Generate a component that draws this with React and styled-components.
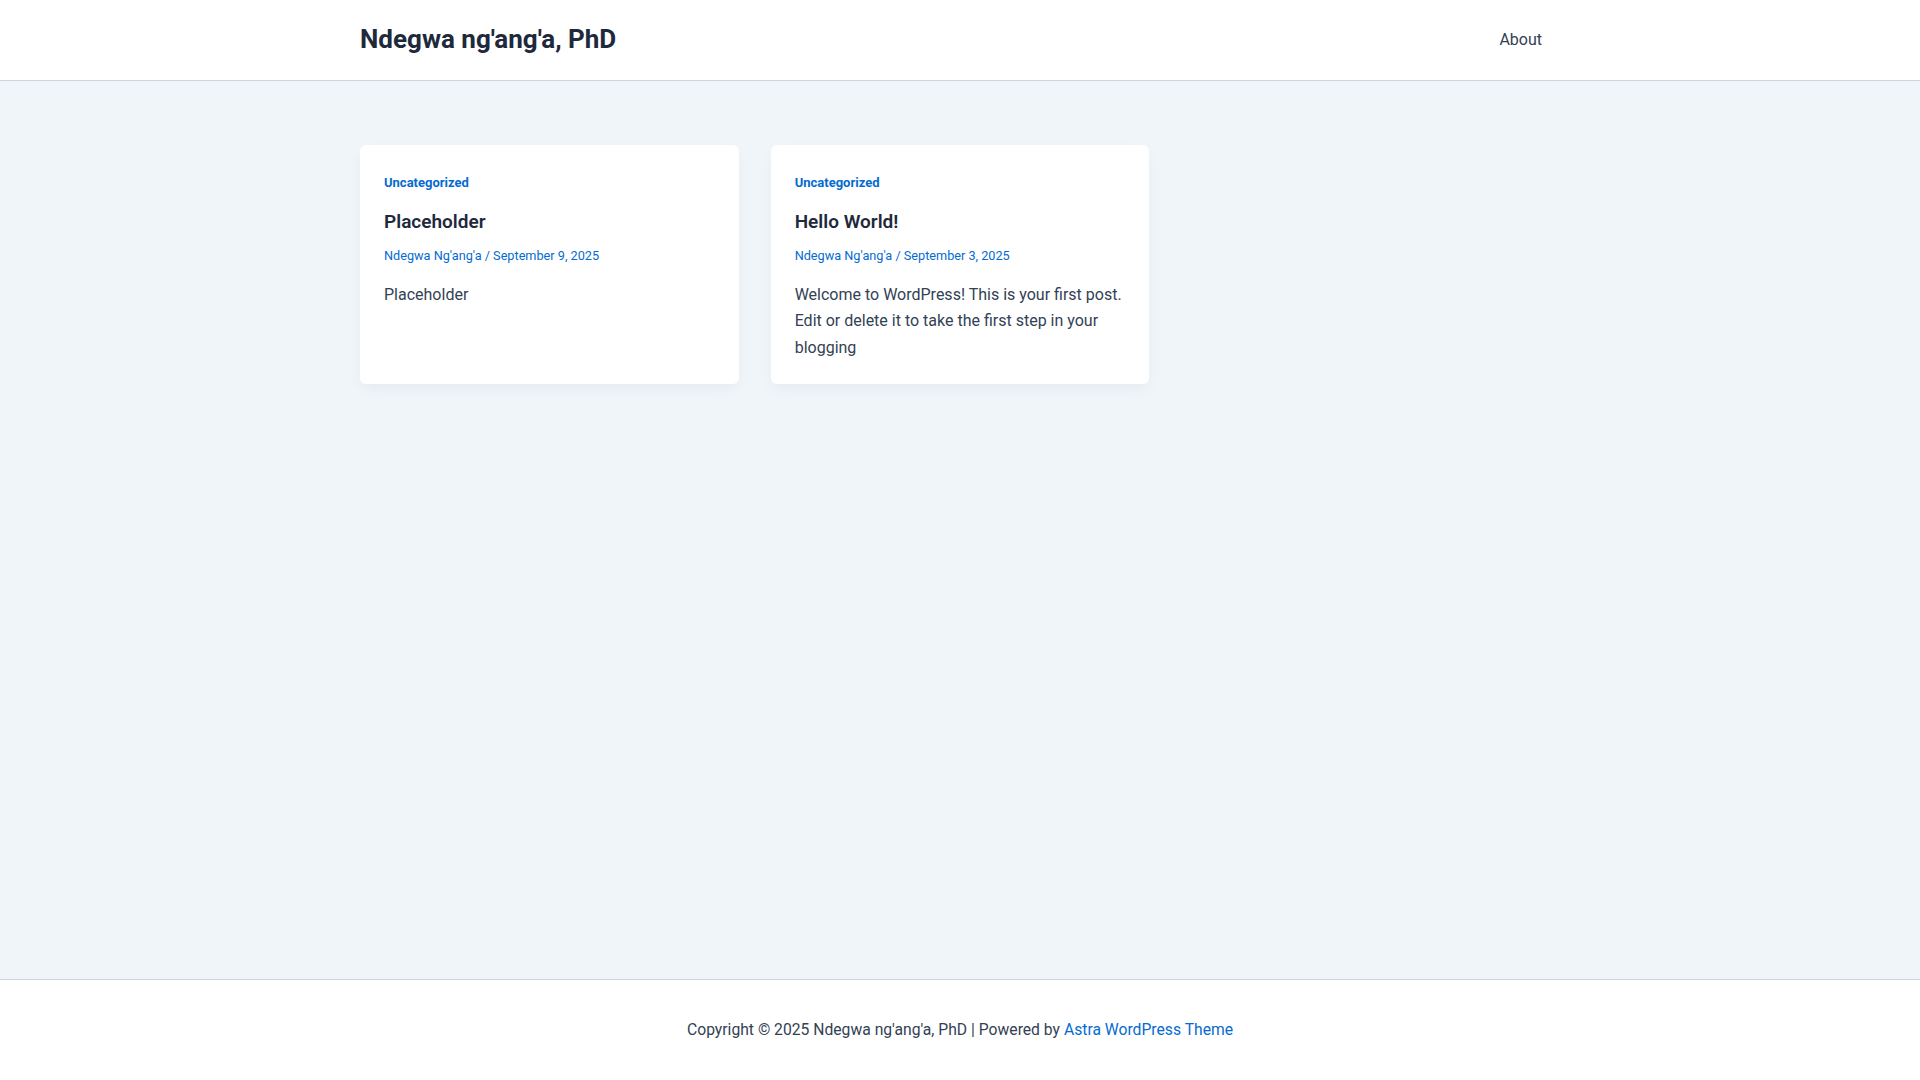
import styled, { createGlobalStyle } from 'styled-components';

const GlobalStyle = createGlobalStyle`
  html, body {
    margin: 0;
    padding: 0;
  }
  body {
    font-family: Roboto, "Liberation Sans", sans-serif;
    color: #334155;
    background: #f0f5fa;
    -webkit-font-smoothing: antialiased;
  }
  a {
    text-decoration: none;
  }
`;

const posts = [
  {
    title: 'Placeholder',
    author: "Ndegwa Ng'ang'a",
    date: 'September 9, 2025',
    excerpt: 'Placeholder',
  },
  {
    title: 'Hello World!',
    author: "Ndegwa Ng'ang'a",
    date: 'September 3, 2025',
    excerpt:
      'Welcome to WordPress! This is your first post. Edit or delete it to take the first step in your blogging',
  },
];

const App = () => {
  return (
    <Page>
      <GlobalStyle />
      <Header>
        <HeaderInner>
          <SiteTitle href="#">Ndegwa ng'ang'a, PhD</SiteTitle>
          <Nav>
            <NavLink href="#">About</NavLink>
          </Nav>
        </HeaderInner>
      </Header>

      <Main>
        <PostGrid>
          {posts.map((post) => (
            <Card key={post.title}>
              <Category href="#">Uncategorized</Category>
              <PostTitle>{post.title}</PostTitle>
              <Meta>
                <a href="#">{post.author}</a> / <span>{post.date}</span>
              </Meta>
              <Excerpt>{post.excerpt}</Excerpt>
            </Card>
          ))}
        </PostGrid>
      </Main>

      <Footer>
        Copyright © 2025 Ndegwa ng'ang'a, PhD | Powered by{' '}
        <FooterLink href="#">Astra WordPress Theme</FooterLink>
      </Footer>
    </Page>
  );
};

export default App;

const Page = styled.div`
  min-height: 100vh;
  display: flex;
  flex-direction: column;
`;

const Header = styled.header`
  background: #fff;
  border-bottom: 1px solid #d1d5db;
`;

const HeaderInner = styled.div`
  width: 1200px;
  margin: 0 auto;
  height: 80px;
  display: flex;
  align-items: center;
  justify-content: space-between;
`;

const SiteTitle = styled.a`
  font-size: 26px;
  font-weight: 700;
  color: #1e293b;
  line-height: 1;
  margin-top: -2px;
`;

const Nav = styled.nav`
  display: flex;
  align-items: center;
`;

const NavLink = styled.a`
  font-size: 16px;
  color: #334155;
  padding: 0 18px 0 16px;
  line-height: 26px;
`;

const Main = styled.main`
  flex: 1;
  padding-top: 64px;
`;

const PostGrid = styled.div`
  width: 1200px;
  margin: 0 auto;
  display: grid;
  grid-template-columns: repeat(3, 1fr);
  gap: 32px;
  align-items: stretch;
`;

const Card = styled.article`
  background: #fff;
  border-radius: 6px;
  box-shadow: 0px 6px 15px -2px rgba(16, 24, 40, 0.05);
  padding: 24px 24px 23px;
  display: flex;
  flex-direction: column;
`;

const Category = styled.a`
  font-size: 13px;
  font-weight: 700;
  color: #046bd2;
  line-height: 20px;
  margin-top: 4px;
  align-self: flex-start;
`;

const PostTitle = styled.h2`
  margin: 15px 0 0;
  font-size: 19px;
  font-weight: 600;
  color: #1e293b;
  line-height: 28px;
`;

const Meta = styled.div`
  margin-top: 10px;
  font-size: 12.7px;
  line-height: 20px;
  color: #046bd2;

  a {
    color: #046bd2;
  }
`;

const Excerpt = styled.p`
  margin: 16px 0 0;
  font-size: 16px;
  line-height: 26.4px;
  color: #334155;
`;

const Footer = styled.footer`
  background: #fff;
  border-top: 1px solid #d1d5db;
  padding: 37px 0;
  text-align: center;
  font-size: 15.7px;
  line-height: 26px;
  color: #334155;
`;

const FooterLink = styled.a`
  color: #046bd2;
`;
